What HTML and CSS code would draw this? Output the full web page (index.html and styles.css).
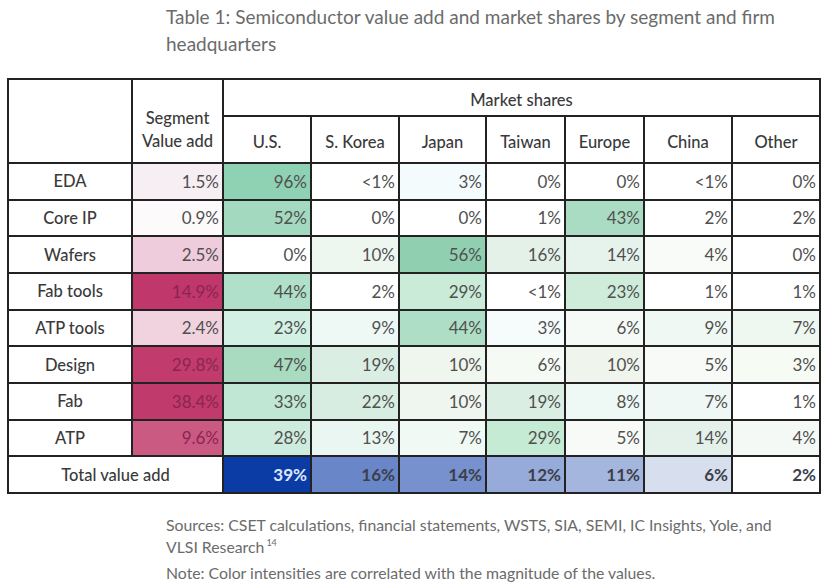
FILE: index.html
```html
<!DOCTYPE html>
<html>
<head>
<meta charset="utf-8">
<link rel="stylesheet" href="styles.css">
</head>
<body>
<div class="page">
  <h1 class="title">Table 1: Semiconductor value add and market shares by segment and firm headquarters</h1>
  <table class="tbl">
    <colgroup>
      <col class="c-seg"><col class="c-val"><col class="c-us"><col class="c-sk"><col class="c-jp"><col class="c-tw"><col class="c-eu"><col class="c-cn"><col class="c-ot">
    </colgroup>
    <thead>
      <tr class="h1">
        <th rowspan="2"></th>
        <th rowspan="2" class="hv">Segment<br>Value add</th>
        <th colspan="7" class="hm">Market shares</th>
      </tr>
      <tr class="h2">
        <th>U.S.</th><th>S. Korea</th><th>Japan</th><th>Taiwan</th><th>Europe</th><th>China</th><th>Other</th>
      </tr>
    </thead>
    <tbody>
      <tr>
        <th>EDA</th>
        <td class="pk" style="background:#f7eef3">1.5%</td>
        <td style="background:#8fd2b3">96%</td><td>&lt;1%</td><td style="background:#f3fbfd">3%</td><td>0%</td><td>0%</td><td>&lt;1%</td><td>0%</td>
      </tr>
      <tr>
        <th>Core IP</th>
        <td class="pk" style="background:#fdfafb">0.9%</td>
        <td style="background:#a3dabf">52%</td><td>0%</td><td>0%</td><td>1%</td><td style="background:#a9dcc2">43%</td><td>2%</td><td>2%</td>
      </tr>
      <tr>
        <th>Wafers</th>
        <td class="pk" style="background:#efccdb">2.5%</td>
        <td>0%</td><td style="background:#eef6f0">10%</td><td style="background:#91cfb1">56%</td><td style="background:#e3f1e8">16%</td><td style="background:#e6f2ec">14%</td><td style="background:#f9fbf8">4%</td><td>0%</td>
      </tr>
      <tr>
        <th>Fab tools</th>
        <td class="pk dark" style="background:#c0376b">14.9%</td>
        <td style="background:#b0e0c9">44%</td><td>2%</td><td style="background:#c9ebd7">29%</td><td>&lt;1%</td><td style="background:#cfecda">23%</td><td>1%</td><td>1%</td>
      </tr>
      <tr>
        <th>ATP tools</th>
        <td class="pk" style="background:#f1d3df">2.4%</td>
        <td style="background:#d2f0e3">23%</td><td style="background:#eef9f5">9%</td><td style="background:#aedfc6">44%</td><td style="background:#f6fbfb">3%</td><td style="background:#f5faf6">6%</td><td style="background:#eff8f3">9%</td><td style="background:#eef8f1">7%</td>
      </tr>
      <tr>
        <th>Design</th>
        <td class="pk dark" style="background:#c13c6c">29.8%</td>
        <td style="background:#a8dbc0">47%</td><td style="background:#dbeee3">19%</td><td style="background:#eff6ee">10%</td><td style="background:#f6faf5">6%</td><td style="background:#eff5ec">10%</td><td style="background:#f7faf7">5%</td><td style="background:#f6fbf4">3%</td>
      </tr>
      <tr>
        <th>Fab</th>
        <td class="pk dark" style="background:#c03a6b">38.4%</td>
        <td style="background:#bfe7d4">33%</td><td style="background:#d8ede1">22%</td><td style="background:#eff6f0">10%</td><td style="background:#dbeee3">19%</td><td style="background:#eef8f5">8%</td><td style="background:#eff8f4">7%</td><td>1%</td>
      </tr>
      <tr>
        <th>ATP</th>
        <td class="pk dark" style="background:#cb5a82">9.6%</td>
        <td style="background:#cdecdd">28%</td><td style="background:#eaf6f1">13%</td><td style="background:#f1f9f5">7%</td><td style="background:#c6ebd5">29%</td><td style="background:#f7faf7">5%</td><td style="background:#e4f1ea">14%</td><td style="background:#f5f9f5">4%</td>
      </tr>
      <tr class="total">
        <th colspan="2">Total value add</th>
        <td class="light" style="background:#0b3ca6">39%</td><td style="background:#6986c8">16%</td><td style="background:#7691cd">14%</td><td style="background:#96abd9">12%</td><td style="background:#a4b6de">11%</td><td style="background:#d7deee">6%</td><td>2%</td>
      </tr>
    </tbody>
  </table>
  <div class="notes">
    <p class="src">Sources: CSET calculations, financial statements, WSTS, SIA, SEMI, IC Insights, Yole, and VLSI Research<span class="ref">14</span></p>
    <p class="note">Note: Color intensities are correlated with the magnitude of the values.</p>
  </div>
</div>
</body>
</html>
```

FILE: styles.css
```css
html, body {
  margin: 0;
  padding: 0;
  background: #ffffff;
}
body {
  font-family: "Lato", "Liberation Sans", sans-serif;
  color: #444;
}
.page {
  width: 825px;
  height: 586px;
  overflow: hidden;
}
.title {
  margin: 3px 0 0 166px;
  width: 640px;
  font-size: 19px;
  font-weight: 400;
  line-height: 27px;
  color: #6b6b6b;
  height: 72px;
}
.tbl {
  margin: 3px 0 0 7px;
  width: 812px;
  border-collapse: collapse;
  table-layout: fixed;
  border: 2px solid #222;
  font-size: 16.5px;
}
.c-seg { width: 124px; }
.c-val { width: 91px; }
.c-us { width: 88px; }
.c-sk { width: 88px; }
.c-jp { width: 87px; }
.c-tw { width: 79px; }
.c-eu { width: 79px; }
.c-cn { width: 88px; }
.c-ot { width: 88px; }
.tbl th, .tbl td {
  border: 2px solid #222;
  padding: 0;
  color: #444;
}
.tbl th {
  font-weight: 500;
  text-align: center;
  color: #3a3a3a;
}
.tbl td {
  text-align: right;
  padding-right: 3px;
  height: 34.67px;
  vertical-align: middle;
  color: #505050;
  font-size: 17px;
}
.tbl tbody th {
  height: 34.67px;
}
.h1 th {
  height: 30px;
}
.hm {
  vertical-align: bottom;
  padding-bottom: 5px !important;
}
.hv {
  vertical-align: bottom;
  padding-bottom: 9px !important;
  line-height: 23px;
}
.h2 th {
  height: 35px;
  vertical-align: bottom;
  padding-bottom: 10px;
}
.pk.dark {
  color: #8a2550;
}
.total td {
  font-weight: 700;
  color: #3c3f4a;
}
.total td.light {
  color: #dfe7ff;
}
.total th {
  font-weight: 500;
}
.notes {
  margin: 20px 0 0 166px;
  width: 620px;
  font-size: 15.8px;
  color: #6b6b6b;
}
.notes p {
  margin: 0;
  line-height: 22px;
}
.ref {
  display: inline-block;
  font-size: 9px;
  line-height: 10px;
  margin-left: 2px;
  vertical-align: 7px;
}
.note {
  margin-top: 4px !important;
}
```
